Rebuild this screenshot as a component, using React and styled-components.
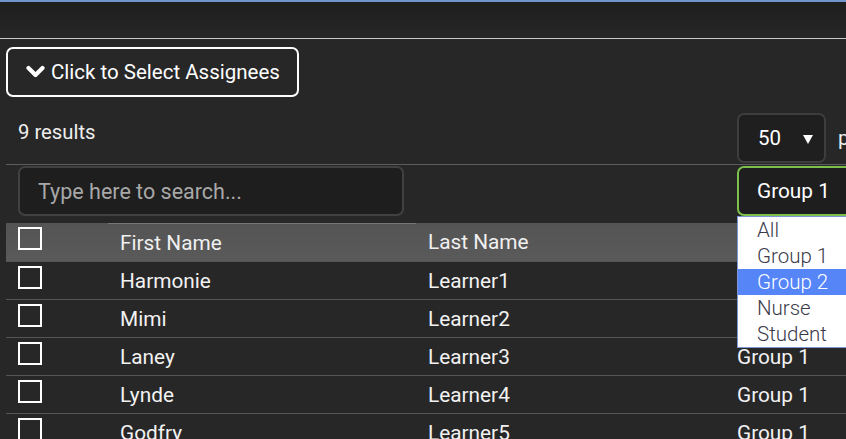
import React from "react";
import styled, { createGlobalStyle } from "styled-components";

const GlobalStyle = createGlobalStyle`
  html, body {
    margin: 0;
    padding: 0;
    background: #272727;
    font-family: Roboto, "Liberation Sans", sans-serif;
    color: #eee;
    overflow: hidden;
  }
`;

const Page = styled.div`
  width: 846px;
  height: 439px;
  overflow: hidden;
  background: #272727;
`;

const TopBar = styled.div`
  height: 36px;
  border-top: 2px solid #7196cc;
  border-bottom: 1px solid #c9c9c9;
  background: linear-gradient(#1f1f1f, #262626);
`;

const Content = styled.div`
  padding: 8px 0 0 6px;
  width: 1000px;
`;

const AssignButton = styled.button`
  display: flex;
  align-items: center;
  gap: 6px;
  height: 50px;
  width: 293px;
  padding: 0 0 0 18px;
  border: 2px solid #fff;
  border-radius: 7px;
  background: transparent;
  color: #fff;
  font-family: inherit;
  font-size: 20.5px;
`;

const Chevron = () => (
  <svg width="19" height="14" viewBox="0 0 19 14">
    <polyline
      points="2.5,3 9.5,10 16.5,3"
      fill="none"
      stroke="#fff"
      strokeWidth="4.2"
      strokeLinecap="round"
      strokeLinejoin="round"
    />
  </svg>
);

const Grid = styled.div`
  display: grid;
  grid-template-columns: 102px 308px 309px 280px;
`;

const ResultsRow = styled(Grid)`
  margin-top: 15px;
  height: 52px;
  border-bottom: 1px solid #5c5c5c;
  align-items: center;
`;

const ResultsText = styled.div`
  grid-column: 1 / 3;
  padding-left: 12px;
  font-size: 20.3px;
  margin-top: -13px;
`;

const PerPage = styled.div`
  grid-column: 4;
  display: flex;
  align-items: center;
  gap: 12px;
  padding-left: 12px;
  font-size: 20.5px;
`;

const SmallSelect = styled.div`
  box-sizing: border-box;
  width: 89px;
  height: 50px;
  display: flex;
  align-items: center;
  justify-content: space-between;
  padding: 0 11px 0 19px;
  border: 2px solid #3d3d3d;
  border-radius: 7px;
  background: #1f1f1f;
  font-size: 20.5px;
  color: #fff;
`;

const Caret = styled.span`
  width: 0;
  height: 0;
  border-left: 5px solid transparent;
  border-right: 5px solid transparent;
  border-top: 9px solid #fff;
  margin-top: 2px;
`;

const FilterRow = styled(Grid)`
  height: 57px;
  align-items: start;
  padding-top: 1px;
`;

const SearchCell = styled.div`
  grid-column: 1 / 3;
  padding: 0 12px;
`;

const SearchInput = styled.input`
  box-sizing: border-box;
  width: 386px;
  height: 50px;
  padding: 0 18px;
  border: 2px solid #414141;
  border-radius: 7px;
  background: #1e1e1e;
  color: #fff;
  font-family: inherit;
  font-size: 21.5px;
  outline: none;
  &::placeholder {
    color: #a8a8a8;
  }
`;

const GroupCell = styled.div`
  grid-column: 4;
  padding-left: 12px;
  position: relative;
`;

const GroupSelect = styled.div`
  box-sizing: border-box;
  width: 140px;
  height: 50px;
  display: flex;
  align-items: center;
  padding-left: 18px;
  border: 2px solid #7cc14b;
  border-radius: 7px;
  background: #1e1e1e;
  color: #fff;
  font-size: 20.8px;
`;

const Dropdown = styled.ul`
  position: absolute;
  top: 50px;
  left: 12px;
  width: 140px;
  margin: 0;
  padding: 0;
  list-style: none;
  background: #fff;
  border: 1px solid #7b95d6;
  z-index: 5;
`;

const Option = styled.li`
  height: 26px;
  line-height: 26px;
  padding-left: 19px;
  font-size: 20.5px;
  font-weight: 300;
  color: ${p => (p.active ? "#fff" : "#3a3a4a")};
  background: ${p => (p.active ? "#5585f6" : "transparent")};
`;

const HeaderRow = styled(Grid)`
  height: 38px;
  background: linear-gradient(#545454, #5a5a5a);
  align-items: center;
  font-size: 20.8px;
  color: #f0f0f0;
`;

const Row = styled(Grid)`
  height: 37px;
  border-top: 1px solid #555;
  align-items: center;
  font-size: 20.8px;
  color: #f2f2f2;
`;

const Cell = styled.div`
  padding-left: 12px;
  white-space: nowrap;
  ${p => p.topLine && "border-top: 1px solid #767676; align-self: stretch; display: flex; align-items: center;"}
`;

const BoxCell = styled.div`
  align-self: start;
  padding: 4px 0 0 12px;
`;

const Checkbox = styled.span`
  display: block;
  box-sizing: border-box;
  width: 24px;
  height: 23px;
  border: 2px solid #fff;
`;

const people = [
  ["Harmonie", "Learner1", "Group 1"],
  ["Mimi", "Learner2", "Group 1"],
  ["Laney", "Learner3", "Group 1"],
  ["Lynde", "Learner4", "Group 1"],
  ["Godfry", "Learner5", "Group 1"],
];

const options = ["All", "Group 1", "Group 2", "Nurse", "Student"];

export default function App() {
  return (
    <Page>
      <GlobalStyle />
      <TopBar />
      <Content>
        <AssignButton>
          <Chevron />
          Click to Select Assignees
        </AssignButton>
        <ResultsRow>
          <ResultsText>9 results</ResultsText>
          <PerPage>
            <SmallSelect>
              50
              <Caret />
            </SmallSelect>
            per page
          </PerPage>
        </ResultsRow>
        <FilterRow>
          <SearchCell>
            <SearchInput placeholder="Type here to search..." />
          </SearchCell>
          <GroupCell>
            <GroupSelect>Group 1</GroupSelect>
            <Dropdown>
              {options.map(o => (
                <Option key={o} active={o === "Group 2"}>
                  {o}
                </Option>
              ))}
            </Dropdown>
          </GroupCell>
        </FilterRow>
        <HeaderRow>
          <BoxCell>
            <Checkbox />
          </BoxCell>
          <Cell topLine>First Name</Cell>
          <Cell>Last Name</Cell>
          <Cell>Group</Cell>
        </HeaderRow>
        {people.map(([first, last, group]) => (
          <Row key={last}>
            <BoxCell>
              <Checkbox />
            </BoxCell>
            <Cell>{first}</Cell>
            <Cell>{last}</Cell>
            <Cell>{group}</Cell>
          </Row>
        ))}
      </Content>
    </Page>
  );
}
